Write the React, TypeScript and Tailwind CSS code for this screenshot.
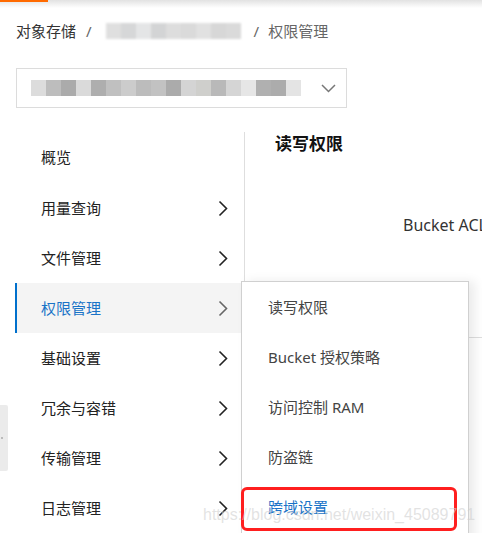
const crumbBlur = ['#dcdcdc', '#d2d3d4', '#e2e3e4', '#cfd0d1', '#dadada', '#d6d6d6', '#dedede', '#d3d3d3', '#d6d6d6']
const selectBlur = [
  '#dcdcdc', '#bdbdbd', '#ababab', '#dadada', '#aeaeae', '#c0c0c0', '#cccccc', '#bcbcbc', '#c2c2c2',
  '#ababab', '#d4d4d4', '#cfcfcc', '#b9b9b9', '#d5d5d5', '#e6e6e6', '#b0b0b0', '#acacac', '#e4e4e4',
]

const navItems = ['概览', '用量查询', '文件管理', '权限管理', '基础设置', '冗余与容错', '传输管理', '日志管理']
const subItems = ['读写权限', 'Bucket 授权策略', '访问控制 RAM', '防盗链', '跨域设置']

function Chevron({ color }: { color: string }) {
  return (
    <svg width="10" height="17" viewBox="0 0 10 17" className="ml-auto shrink-0">
      <polyline points="1.5,1.5 8.5,8.5 1.5,15.5" fill="none" stroke={color} strokeWidth="1.6" />
    </svg>
  )
}

export default function App() {
  return (
    <div
      className="relative w-[482px] h-[533px] overflow-hidden bg-white text-[#333]"
      style={{ fontFamily: '"Noto Sans", "Noto Sans CJK SC", sans-serif' }}
    >
      {/* top header shadow */}
      <div className="h-[8px] bg-gradient-to-b from-[#e2e2e2] to-white">
        <div className="w-[48px] h-[2px] bg-[#ff6a00]" />
      </div>

      {/* breadcrumb */}
      <div className="flex items-center h-[30px] mt-[8px] pl-[16px] text-[15px]">
        <span className="text-[#333]">对象存储</span>
        <span className="ml-[10px] mr-[14px] text-[#666]">/</span>
        <div className="flex w-[135px] h-[16px] blur-[1px] opacity-90">
          {crumbBlur.map((c, i) => (
            <div key={i} className="w-[15px] h-full" style={{ background: c }} />
          ))}
        </div>
        <span className="ml-[13px] mr-[9px] text-[#666]">/</span>
        <span className="text-[#666]">权限管理</span>
      </div>

      {/* bucket select */}
      <div className="mt-[22px] ml-[16px] w-[331px] h-[40px] border border-[#dcdcdc] flex items-center pl-[14px] pr-[10px]">
        <div className="flex h-[16px] blur-[0.6px]">
          {selectBlur.map((c, i) => (
            <div key={i} className="w-[15px] h-full" style={{ background: c }} />
          ))}
        </div>
        <svg width="15" height="9" viewBox="0 0 15 9" className="ml-auto">
          <polyline points="1,1 7.5,7.5 14,1" fill="none" stroke="#777" strokeWidth="1.5" />
        </svg>
      </div>

      {/* body */}
      <div className="flex mt-[24px]">
        <div className="ml-[15px] w-[230px] border-r border-[#dedede] h-[152px] shrink-0 flex flex-col">
          {navItems.map((item, i) => {
            const active = i === 3
            return (
              <div
                key={item}
                className={`flex items-center shrink-0 ${i === 0 ? 'h-[51px]' : 'h-[50px]'} pr-[16px] text-[15px] ${
                  active ? 'bg-[#f4f4f4] border-l-2 border-[#0070cc] text-[#1a73c7] pl-[24px]' : 'text-[#222] pl-[26px]'
                }`}
              >
                <span>{item}</span>
                {i > 0 && <Chevron color={active ? '#666' : '#222'} />}
              </div>
            )
          })}
        </div>

        <div className="flex-1 min-w-0 whitespace-nowrap">
          <div className="pl-[30px] text-[17px] font-bold text-[#111] leading-[24px]">读写权限</div>
          <div className="pl-[158px] mt-[58px] text-[16px] text-[#333] leading-[22px]">Bucket ACL</div>
          <div className="mt-[101px] border-t border-[#dedede]" />
        </div>
      </div>

      {/* grey tab at left edge */}
      <div className="absolute left-0 top-[405px] w-[8px] h-[66px] bg-[#ebebeb] rounded-r-[2px] flex items-center">
        <div className="w-[2px] h-[2px] bg-[#bbb] ml-[1px]" />
      </div>

      {/* submenu popup */}
      <div className="absolute left-[241px] top-[281px] w-[228px] h-[270px] bg-white border border-[#d0d0d0] shadow-[6px_0_10px_rgba(0,0,0,0.08)]">
        {subItems.map((s, i) => (
          <div
            key={s}
            className={`h-[50px] flex items-center pl-[26px] text-[15px] ${
              i === 4 ? 'text-[#1a73c7]' : 'text-[#444]'
            }`}
          >
            {s}
          </div>
        ))}
      </div>

      {/* red highlight */}
      <div className="absolute left-[241px] top-[487px] w-[216px] h-[44px] border-[3px] border-[#ff1f1f] rounded-[6px]" />

      {/* watermark */}
      <div
        className="absolute left-[203px] top-[503px] text-[16px] text-[#cfcfcf]/60 whitespace-nowrap"
        style={{ fontFamily: '"Liberation Sans", Arial, sans-serif' }}
      >
        https://blog.csdn.net/weixin_45089791
      </div>
    </div>
  )
}
